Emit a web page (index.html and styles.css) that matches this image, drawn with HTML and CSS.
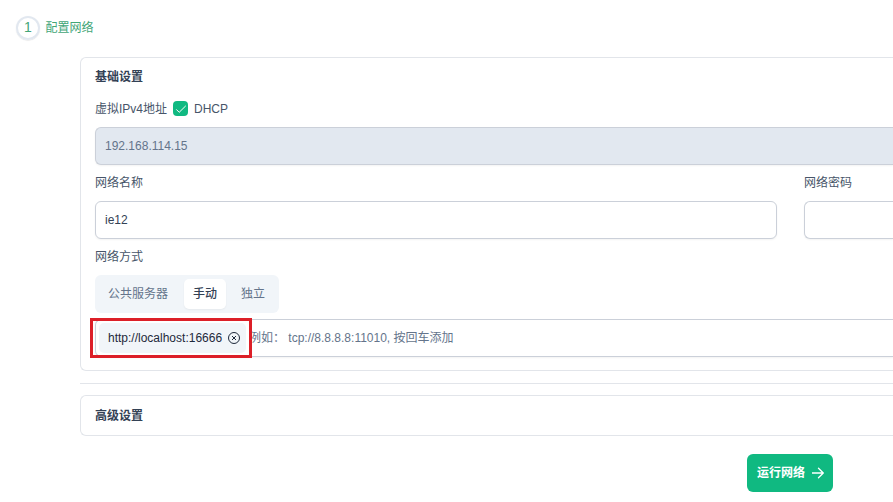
FILE: index.html
```html
<!DOCTYPE html>
<html lang="zh-CN">
<head>
<meta charset="utf-8">
<title>配置网络</title>
<link rel="stylesheet" href="styles.css">
</head>
<body>
<header class="step">
  <span class="step-number">1</span>
  <span class="step-title">配置网络</span>
</header>
<main class="content">
  <section class="panel basic">
    <h2 class="panel-title">基础设置</h2>
    <div class="dhcp-row">
      <span>虚拟IPv4地址</span>
      <span class="checkbox"><svg width="12" height="12" viewBox="0 0 12 12"><path d="M1.3 6.4 4.2 9.3 10.8 2.8"/></svg></span>
      <span>DHCP</span>
    </div>
    <div class="input open disabled">192.168.114.15</div>
    <div class="columns">
      <div class="field">
        <div class="label">网络名称</div>
        <div class="input">ie12</div>
      </div>
      <div class="field">
        <div class="label">网络密码</div>
        <div class="input open"></div>
      </div>
    </div>
    <div class="label">网络方式</div>
    <div class="tabs">
      <span class="tab">公共服务器</span>
      <span class="tab active">手动</span>
      <span class="tab">独立</span>
    </div>
    <div class="input open chips">
      <span class="chip">http://localhost:16666<svg width="12" height="12" viewBox="0 0 12 12"><circle cx="6" cy="6" r="5.5"/><path d="M4 4 8 8M8 4 4 8"/></svg></span>
      <span class="placeholder">例如： tcp://8.8.8.8:11010, 按回车添加</span>
      <span class="highlight"></span>
    </div>
  </section>
  <hr class="divider">
  <section class="panel advanced">
    <h2 class="panel-title">高级设置</h2>
  </section>
  <div class="actions">
    <button class="run">运行网络<svg width="12" height="12" viewBox="0 0 12 12"><path d="M0 6H11.3M6.5 1.2 11.3 6 6.5 10.8"/></svg></button>
  </div>
</main>
</body>
</html>
```
FILE: styles.css
```css
* { box-sizing: border-box; }
body {
  margin: 0;
  height: 502px;
  overflow: hidden;
  background: #fff;
  color: #475569;
  font: 12px/18px "Liberation Sans", "Noto Sans CJK SC", sans-serif;
}
svg { fill: none; stroke: currentColor; flex: none; }
.step {
  display: flex;
  align-items: center;
  gap: 5.5px;
  height: 57px;
  padding: 0 0 1px 16px;
  color: #43a677;
}
.step-number {
  width: 24px;
  height: 24px;
  border: 2px solid #e2e8f0;
  border-radius: 50%;
  box-shadow: 0 .5px 1px rgba(0, 0, 0, .14);
  font-size: 14px;
  line-height: 19px;
  text-align: center;
}
.content { margin-left: 80px; }
.panel {
  border: 1px solid #e2e5ea;
  border-right: 0;
  border-radius: 6px 0 0 6px;
  padding: 0 0 0 14px;
}
.basic { height: 314px; }
.panel-title {
  margin: 0;
  padding: 10px 0;
  color: #334155;
  font-size: 12px;
  font-weight: 600;
  line-height: 18px;
}
.dhcp-row {
  display: flex;
  align-items: center;
  height: 31px;
  padding-bottom: 6px;
  gap: 6px;
}
.checkbox {
  display: grid;
  place-items: center;
  width: 15px;
  height: 15px;
  border-radius: 4px;
  background: #10b981;
  color: #fff;
}
.input {
  display: flex;
  align-items: center;
  height: 38px;
  padding: 0 9px;
  border: 1px solid #cbd0d9;
  border-radius: 6px;
  background: #fff;
  color: #334155;
  box-shadow: 0 1px 2px rgba(18, 18, 23, .05);
}
.open { border-right: 0; border-radius: 6px 0 0 6px; }
.disabled { background: #e2e8f0; color: #64748b; }
.columns { display: grid; grid-template-columns: 682px 1fr; gap: 27px; }
.label { height: 36px; line-height: 37px; }
.tabs {
  display: flex;
  width: 184px;
  height: 38px;
  padding: 4px;
  border-radius: 6px;
  background: #f1f5f9;
  color: #64748b;
}
.tab { padding: 0 9px; line-height: 31px; }
.tab:first-child { width: 85px; }
.tab:last-child { padding-left: 15px; }
.active {
  width: 42px;
  border-radius: 5px;
  background: #fff;
  color: #334155;
  box-shadow: 0 1px 2px rgba(0, 0, 0, .05);
  font-weight: 500;
}
.chips { position: relative; margin-top: 6px; padding: 0 3px; }
.chip {
  display: flex;
  align-items: center;
  gap: 6px;
  width: 147px;
  height: 30px;
  padding-left: 9px;
  border-radius: 5px;
  background: #f1f5f9;
  color: #1e293b;
}
.placeholder { margin-left: 3px; color: #64748b; white-space: pre; }
.highlight {
  position: absolute;
  left: -6px;
  top: -2px;
  width: 162px;
  height: 40px;
  border: 3px solid #dc1f28;
}
.divider { height: 1px; margin: 12px 0 11px; border: 0; background: #e2e5ea; }
.advanced { height: 41px; }
.advanced .panel-title { padding-top: 11px; padding-bottom: 9px; }
.actions { padding: 18px 0 0 667px; }
.run {
  display: flex;
  align-items: center;
  gap: 7px;
  width: 86px;
  height: 38px;
  padding: 0 0 0 10px;
  border: 0;
  border-radius: 6px;
  background: #10b981;
  color: #fff;
  font: 600 12px/18px "Liberation Sans", "Noto Sans CJK SC", sans-serif;
}
.run svg { stroke-width: 1.3; stroke-linecap: round; stroke-linejoin: round; }
```
